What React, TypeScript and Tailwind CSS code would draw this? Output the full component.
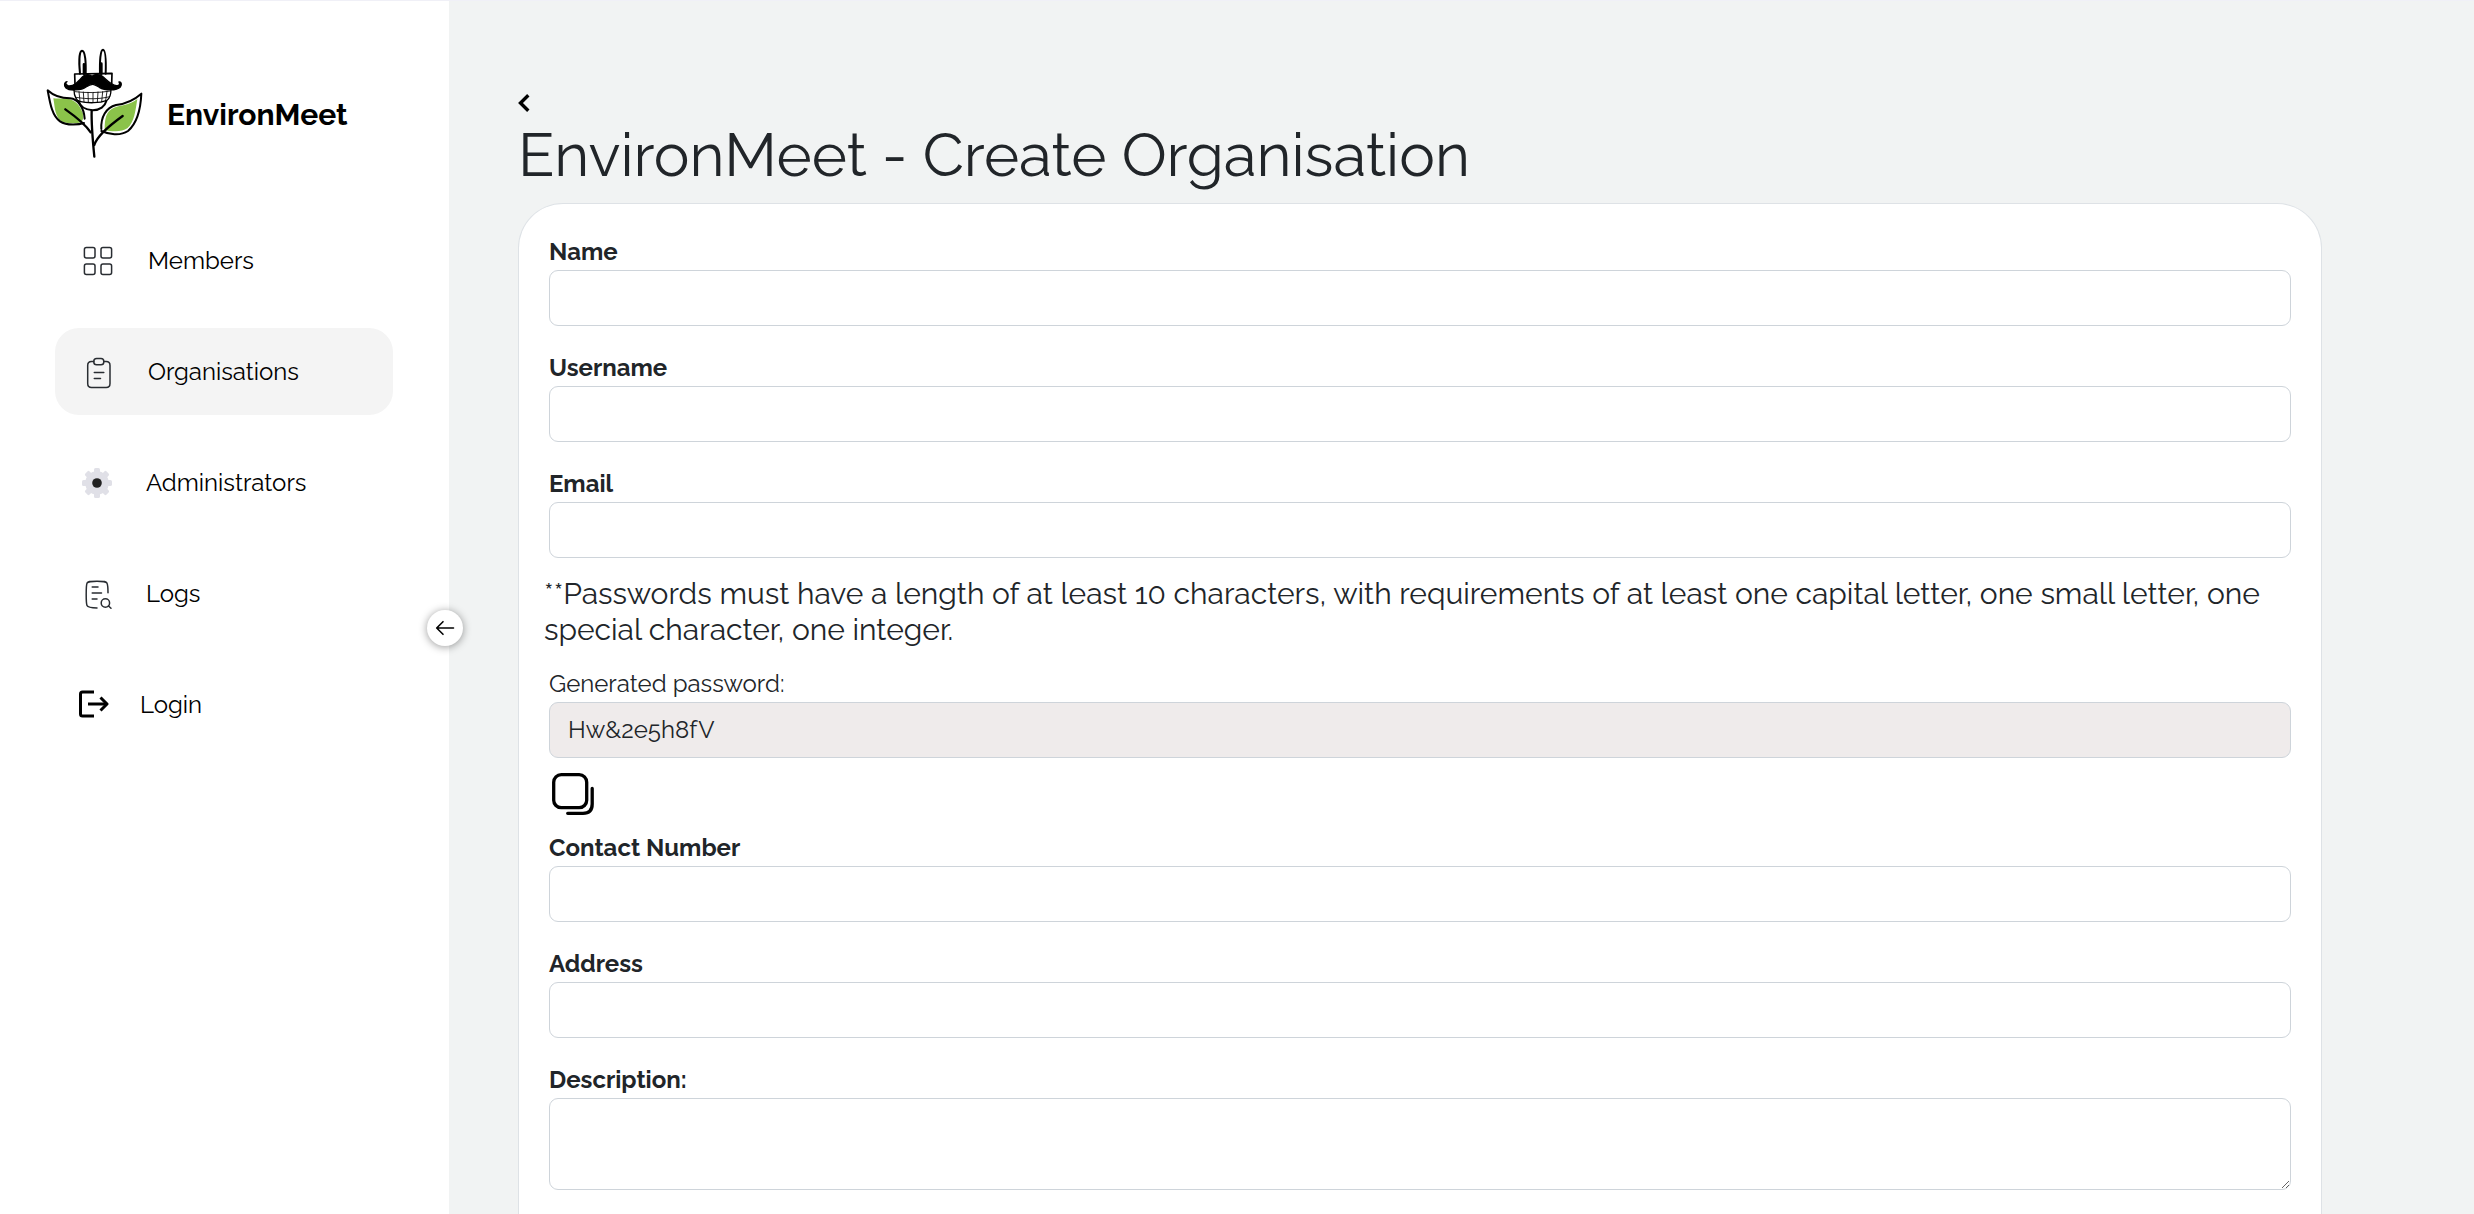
import React from "react";

function Logo() {
  return (
    <svg viewBox="20 22 300 336" className="h-28 w-[100px] shrink-0" fill="none" stroke="#000" strokeLinecap="round" strokeLinejoin="round" aria-hidden="true">
      <g strokeWidth="6">
        <path d="M122 102C119 72 119 34 128 33C138 33 140 70 139 102" />
        <path d="M182 102C181 66 183 30 191 30C200 31 200 72 199 102" />
        <path d="M134 74V102M186 72V102" strokeWidth="8" />
        <path d="M106 103L218 101L217 134M106 103L107 134" strokeWidth="5" />
        <path d="M104 150C104 172 114 184 120 185C145 191 180 191 203 182C211 176 215 162 215 148" strokeWidth="4" />
        <path d="M118 184C122 200 138 211 160 212C182 212 197 200 201 184" />
        <path d="M157 213C156 248 160 300 165 351" strokeWidth="7" />
      </g>
      <g strokeWidth="2.5">
        <path d="M107 156C140 160 178 160 214 154M110 173C145 179 180 179 211 171" />
        <path d="M119 156L122 184M132 157L134 187M146 158L147 188M161 158V188M176 157L174 188M190 156L187 186M203 155L199 182" />
      </g>
      <path d="M158 110C150 102 136 104 129 112C115 128 103 141 86 138C79 136 77 129 83 126C75 126 73 137 79 144C91 155 127 152 140 142C149 136 155 134 160 134C166 134 172 138 180 143C196 153 232 154 243 142C249 134 245 125 239 127C243 132 240 139 232 138C216 137 205 124 192 112C184 103 168 102 158 110Z" fill="#000" strokeWidth="4" />
      <path d="M42 176C62 178 78 174 96 180C118 190 124 204 131 222C133 238 130 246 120 249C96 252 71 252 60 240C46 222 46 198 42 176Z" fill="#8bc34a" stroke="none" />
      <path d="M294 178C288 214 286 246 264 266C248 278 214 276 196 270C196 236 200 214 224 204C246 196 268 198 294 178Z" fill="#8bc34a" stroke="none" />
      <g strokeWidth="6">
        <path d="M136 237C134 204 116 178 92 176C64 176 42 168 25 152C32 190 38 228 62 245C84 260 122 254 134 250" />
        <path d="M186 268C184 232 200 204 230 196C264 192 288 178 306 162C304 208 294 250 266 274C242 290 208 284 186 274" />
        <path d="M78 209C108 230 138 254 154 278M250 229C218 252 174 286 165 316" strokeWidth="7" />
      </g>
    </svg>
  );
}

function GridIcon() {
  return (
    <svg viewBox="0 0 38 38" className="size-[38px] shrink-0" fill="none" stroke="#292d32" strokeWidth="1.5" aria-hidden="true">
      {[5.4, 22].map((x) => [5.4, 22].map((y) => <rect key={`${x}-${y}`} x={x} y={y} width="10.6" height="10.6" rx="2" />))}
    </svg>
  );
}

function ClipboardIcon() {
  return (
    <svg viewBox="0 0 38 38" className="size-[38px] shrink-0" fill="none" stroke="#292d32" strokeWidth="1.5" strokeLinecap="round" aria-hidden="true">
      <path d="M14.8 8.6H12.5C10 8.6 8.7 9.8 8.7 12.5V30.5C8.7 33.3 10 34.5 12.5 34.5H27.2C29.7 34.5 31 33.3 31 30.5V12.5C31 9.8 29.7 8.6 27.2 8.6H25" />
      <rect x="14.8" y="5.4" width="10" height="6.4" rx="2.8" />
      <path d="M15.3 19.5H24.8M15.3 25.5H21.5" />
    </svg>
  );
}

function GearIcon() {
  return (
    <svg viewBox="0 0 36 36" className="size-9 shrink-0" aria-hidden="true">
      <g fill="#e0e0e7">
        <circle cx="18" cy="18" r="11.8" />
        {[0, 45, 90, 135].map((a) => (
          <rect key={a} x="15" y="3" width="6" height="30" rx="1.6" transform={`rotate(${a} 18 18)`} />
        ))}
      </g>
      <circle cx="18" cy="18" r="4.8" fill="#222" />
    </svg>
  );
}

function LogsIcon() {
  return (
    <svg viewBox="0 0 36 36" className="size-9 shrink-0" fill="none" stroke="#292d32" strokeWidth="1.5" strokeLinecap="round" aria-hidden="true">
      <path d="M29 16.8C29 12 28.8 9 28 7.2C27.2 5.6 25.5 5.2 18 5.2C10.5 5.2 8.8 5.6 8 7.2C7.2 9 7.2 13 7.2 18.5C7.2 24 7.2 27.5 8 29.5C8.8 31.4 11 31.8 18 32" />
      <path d="M13.2 11H19M13.2 17H22.5M13.2 23H18" />
      <circle cx="26.4" cy="27" r="4.2" />
      <path d="M29.5 30L32 32.3" />
    </svg>
  );
}

function LoginIcon() {
  return (
    <svg viewBox="0 0 30 30" className="size-[30px] shrink-0" fill="none" stroke="#000" strokeWidth="3" aria-hidden="true">
      <path d="M15 2H3.5Q1.5 2 1.5 4V24Q1.5 26 3.5 26H15" />
      <path d="M9 14H28" />
      <path d="M21.5 7.5L28 14L21.5 20.5" strokeLinejoin="round" />
    </svg>
  );
}

const NAV = [
  { label: "Members", Icon: GridIcon },
  { label: "Organisations", Icon: ClipboardIcon, active: true },
  { label: "Administrators", Icon: GearIcon },
  { label: "Logs", Icon: LogsIcon },
  { label: "Login", Icon: LoginIcon },
];

function Sidebar() {
  return (
    <aside className="relative w-[449px] shrink-0 bg-white text-black">
      <a href="#" className="flex items-end gap-[21px] pt-[46px] pl-[46px]">
        <Logo />
        <span className="pb-[26px] text-[30px] leading-9 font-bold">EnvironMeet</span>
      </a>
      <nav className="mt-[58px] mr-14 ml-[55px] flex flex-col gap-6">
        {NAV.map(({ label, Icon, active }) => (
          <a
            key={label}
            href="#"
            aria-current={active ? "page" : undefined}
            className={`flex h-[87px] items-center gap-[31px] rounded-3xl pl-6 text-2xl ${active ? "bg-[#f4f4f4]" : ""}`}
          >
            <Icon />
            {label}
          </a>
        ))}
      </nav>
      <button
        type="button"
        aria-label="Collapse sidebar"
        className="absolute top-[609px] -right-3.5 flex size-9 items-center justify-center rounded-full bg-white shadow-[0_1px_8px_rgba(0,0,0,0.4)]"
      >
        <svg viewBox="0 0 20 20" className="size-5" fill="none" stroke="#000" strokeWidth="1.6" strokeLinecap="round" strokeLinejoin="round" aria-hidden="true">
          <path d="M18.5 10H2M8 3.7L1.7 10L8 16.3" />
        </svg>
      </button>
    </aside>
  );
}

function Field({ id, label }: { id: string; label: string }) {
  return (
    <div className="flex flex-col">
      <label htmlFor={id} className="text-2xl leading-9 font-bold">{label}</label>
      <input id={id} type="text" className="h-14 w-full rounded-[9px] border border-[#ced4da] bg-white px-[18px] text-2xl" />
    </div>
  );
}

export default function App() {
  return (
    <div className="flex min-h-screen border-t border-[#f0f0f7] bg-[#f1f3f3] font-['Raleway','Lato',sans-serif] text-[#212529]">
      <Sidebar />
      <main className="flex min-w-0 flex-1 flex-col pt-[86px] pr-[152px] pl-[69px]">
        <a href="#" aria-label="Back" className="flex h-8 w-8 items-center text-black">
          <svg viewBox="0 0 12 18" className="h-[18px] w-3" fill="none" stroke="currentColor" strokeWidth="3.4" aria-hidden="true">
            <path d="M10.3 1.3L2.5 9L10.3 16.7" />
          </svg>
        </a>
        <h1 className="mb-3 text-6xl leading-[72px] font-normal">EnvironMeet - Create Organisation</h1>
        <form className="flex flex-1 flex-col rounded-t-[45px] border border-b-0 border-[#dee2e6] bg-white px-[30px] pt-[30px]">
          <div className="flex flex-col gap-6">
            <Field id="name" label="Name" />
            <Field id="username" label="Username" />
            <Field id="email" label="Email" />
          </div>
          <p className="mt-[18px] -ml-[5px] text-[30px] leading-9">
            **Passwords must have a length of at least 10 characters, with requirements of at least one capital letter, one small letter, one special character, one integer.
          </p>
          <label htmlFor="password" className="mt-[18px] text-2xl leading-9">Generated password:</label>
          <input
            id="password"
            type="text"
            readOnly
            defaultValue="Hw&2e5h8fV"
            className="h-14 w-full rounded-[9px] border border-[#ced4da] bg-[#efebeb] px-[18px] pb-0.5 text-2xl"
          />
          <button type="button" aria-label="Copy password" className="flex h-[72px] w-12 items-center justify-center">
            <svg viewBox="0 0 42 42" className="size-[42px]" fill="none" stroke="#000" strokeWidth="3.3" strokeLinecap="round" aria-hidden="true">
              <rect x="1.7" y="1.7" width="33" height="33" rx="7.5" />
              <path d="M40.2 15.5V31Q40.2 40.3 31 40.3H15.7" />
            </svg>
          </button>
          <div className="flex flex-col gap-6">
            <Field id="contact" label="Contact Number" />
            <Field id="address" label="Address" />
            <div className="flex flex-col">
              <label htmlFor="description" className="text-2xl leading-9 font-bold">Description:</label>
              <textarea id="description" className="h-[92px] w-full rounded-[9px] border border-[#ced4da] bg-white px-[18px] py-2 text-2xl" />
            </div>
          </div>
        </form>
      </main>
    </div>
  );
}
